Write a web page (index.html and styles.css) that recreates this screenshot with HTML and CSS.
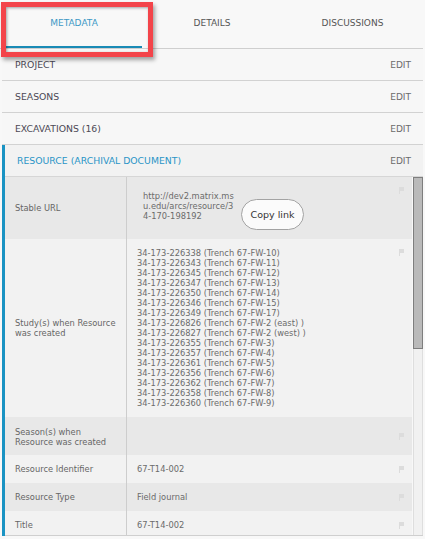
FILE: index.html
```html
<!DOCTYPE html>
<html lang="en">
<head>
<meta charset="utf-8">
<title>Resource metadata</title>
<link rel="stylesheet" href="styles.css">
</head>
<body>
<div class="app">
  <nav class="tabs">
    <div class="tab active"><span class="tab-label">METADATA</span></div>
    <div class="tab"><span class="tab-label">DETAILS</span></div>
    <div class="tab"><span class="tab-label">DISCUSSIONS</span></div>
  </nav>
  <div class="callout"></div>

  <div class="section"><span class="title">PROJECT</span><span class="edit">EDIT</span></div>
  <div class="section"><span class="title">SEASONS</span><span class="edit">EDIT</span></div>
  <div class="section"><span class="title">EXCAVATIONS (16)</span><span class="edit">EDIT</span></div>

  <div class="resource">
    <div class="section open"><span class="title">RESOURCE (ARCHIVAL DOCUMENT)</span><span class="edit">EDIT</span></div>
    <div class="body">
      <div class="table">
        <div class="row dark tall url-row">
          <div class="label">Stable URL</div>
          <div class="value url-value">
            <span class="url">http://dev2.matrix.msu.edu/arcs/resource/34-170-198192</span>
            <button class="copy">Copy link</button>
          </div>
          <div class="flag"><svg width="5" height="7" viewBox="0 0 5 7"><path d="M0 0H5V4H1V7H0Z"/></svg></div>
        </div>
        <div class="row light tall">
          <div class="label">Study(s) when Resource was created</div>
          <div class="value list">
            <div>34-173-226338 (Trench 67-FW-10)</div>
            <div>34-173-226343 (Trench 67-FW-11)</div>
            <div>34-173-226345 (Trench 67-FW-12)</div>
            <div>34-173-226347 (Trench 67-FW-13)</div>
            <div>34-173-226350 (Trench 67-FW-14)</div>
            <div>34-173-226346 (Trench 67-FW-15)</div>
            <div>34-173-226349 (Trench 67-FW-17)</div>
            <div>34-173-226826 (Trench 67-FW-2 (east) )</div>
            <div>34-173-226827 (Trench 67-FW-2 (west) )</div>
            <div>34-173-226355 (Trench 67-FW-3)</div>
            <div>34-173-226357 (Trench 67-FW-4)</div>
            <div>34-173-226361 (Trench 67-FW-5)</div>
            <div>34-173-226356 (Trench 67-FW-6)</div>
            <div>34-173-226362 (Trench 67-FW-7)</div>
            <div>34-173-226358 (Trench 67-FW-8)</div>
            <div>34-173-226360 (Trench 67-FW-9)</div>
          </div>
          <div class="flag"><svg width="5" height="7" viewBox="0 0 5 7"><path d="M0 0H5V4H1V7H0Z"/></svg></div>
        </div>
        <div class="row dark two-line">
          <div class="label">Season(s) when<br>Resource was created</div>
          <div class="value"></div>
          <div class="flag"><svg width="5" height="7" viewBox="0 0 5 7"><path d="M0 0H5V4H1V7H0Z"/></svg></div>
        </div>
        <div class="row light">
          <div class="label">Resource Identifier</div>
          <div class="value">67-T14-002</div>
          <div class="flag"><svg width="5" height="7" viewBox="0 0 5 7"><path d="M0 0H5V4H1V7H0Z"/></svg></div>
        </div>
        <div class="row dark">
          <div class="label">Resource Type</div>
          <div class="value">Field journal</div>
          <div class="flag"><svg width="5" height="7" viewBox="0 0 5 7"><path d="M0 0H5V4H1V7H0Z"/></svg></div>
        </div>
        <div class="row light">
          <div class="label">Title</div>
          <div class="value">67-T14-002</div>
          <div class="flag"><svg width="5" height="7" viewBox="0 0 5 7"><path d="M0 0H5V4H1V7H0Z"/></svg></div>
        </div>
      </div>
      <div class="scrollbar"><div class="thumb"></div></div>
    </div>
  </div>
</div>
</body>
</html>
```

FILE: styles.css
```css
html, body {
  margin: 0;
  padding: 0;
  background: #f8f8f8;
  height: 539px;
  overflow: hidden;
}

body {
  font-family: "DejaVu Sans", Verdana, sans-serif;
}

.app {
  position: relative;
  margin-left: 2px;
  width: 421px;
}

/* Tabs */
.tabs {
  display: grid;
  grid-template-columns: 140px 140px 141px;
  height: 48px;
  border-bottom: 1px solid #cfcfcf;
  margin-left: -2px;
  padding-left: 2px;
}

.tab {
  display: flex;
  align-items: center;
  justify-content: center;
  padding-bottom: 3px;
  font-size: 9px;
  color: #555;
  box-sizing: border-box;
}

.tab.active {
  color: #3d99c6;
  border-bottom: 2px solid #1a8bb6;
  margin: 0 0 0 4px;
  padding-bottom: 1px;
}

.callout {
  position: absolute;
  left: -1px;
  top: 2px;
  width: 142px;
  height: 45px;
  border: 5px solid #f3444a;
  box-shadow: 2px 3px 4px rgba(0, 0, 0, 0.35), inset 1px 1px 3px rgba(0, 0, 0, 0.35);
  pointer-events: none;
}

/* Accordion sections */
.section {
  display: flex;
  align-items: center;
  justify-content: space-between;
  height: 31px;
  padding: 0 12px 0 13px;
  border-bottom: 1px solid #d2d2d2;
  background: #f7f7f7;
}

.title {
  font-size: 9.3px;
  color: #4c4955;
}

.edit {
  font-size: 9px;
  color: #6a6a6a;
}

.resource {
  border-left: 3px solid #1a93c3;
}

.section.open {
  background: #f2f2f2;
  padding-left: 12px;
  padding-right: 12px;
  border-bottom: 1px solid #d6d6d6;
  height: 31px;
}

.section.open .title {
  color: #2a95c7;
}

/* Body */
.body {
  display: flex;
  height: 358px;
  overflow: hidden;
  border-bottom: 1px solid #cfcfcf;
}

.table {
  flex: 1;
  font-size: 8.3px;
  line-height: 10px;
  color: #6b6b6b;
}

.row {
  display: grid;
  grid-template-columns: 122px 1fr 13px;
  min-height: 28px;
}

.row.dark { background: #e8e8e8; }
.row.light { background: #f2f2f2; }

.label {
  display: flex;
  align-items: center;
  padding: 0 10px;
  border-right: 1px solid #cdcdcd;
  color: #666;
}

.value {
  display: flex;
  align-items: center;
  padding: 0 10px;
}

.url-row .value {
  align-items: flex-start;
  padding: 14px 0 9px 16px;
  gap: 4px;
}

.url {
  width: 94px;
  word-break: break-all;
}

.copy {
  margin-top: 8px;
  width: 63px;
  height: 31px;
  border: 1px solid #a3a3a3;
  border-radius: 16px;
  background: #fbfbfb;
  font-family: "DejaVu Sans", Verdana, sans-serif;
  font-size: 9.5px;
  color: #333;
  padding: 0;
}

.list {
  display: block;
  padding: 9px 10px;
}

.two-line {
  min-height: 38px;
}

.two-line .label {
  padding-top: 1px;
}

.flag {
  align-self: center;
  display: flex;
}

.tall .flag {
  align-self: start;
  margin-top: 10px;
}

.flag svg {
  fill: #dcdcdc;
}

/* fake scrollbar */
.scrollbar {
  width: 8px;
  margin-left: 1px;
  border-left: 1px solid #dedede;
  border-right: 1px solid #dedede;
  background: #f1f1f1;
}

.thumb {
  height: 170px;
  background: #bababa;
  border: 1px solid #7e7e7e;
  margin: 0 -1px;
}
```
